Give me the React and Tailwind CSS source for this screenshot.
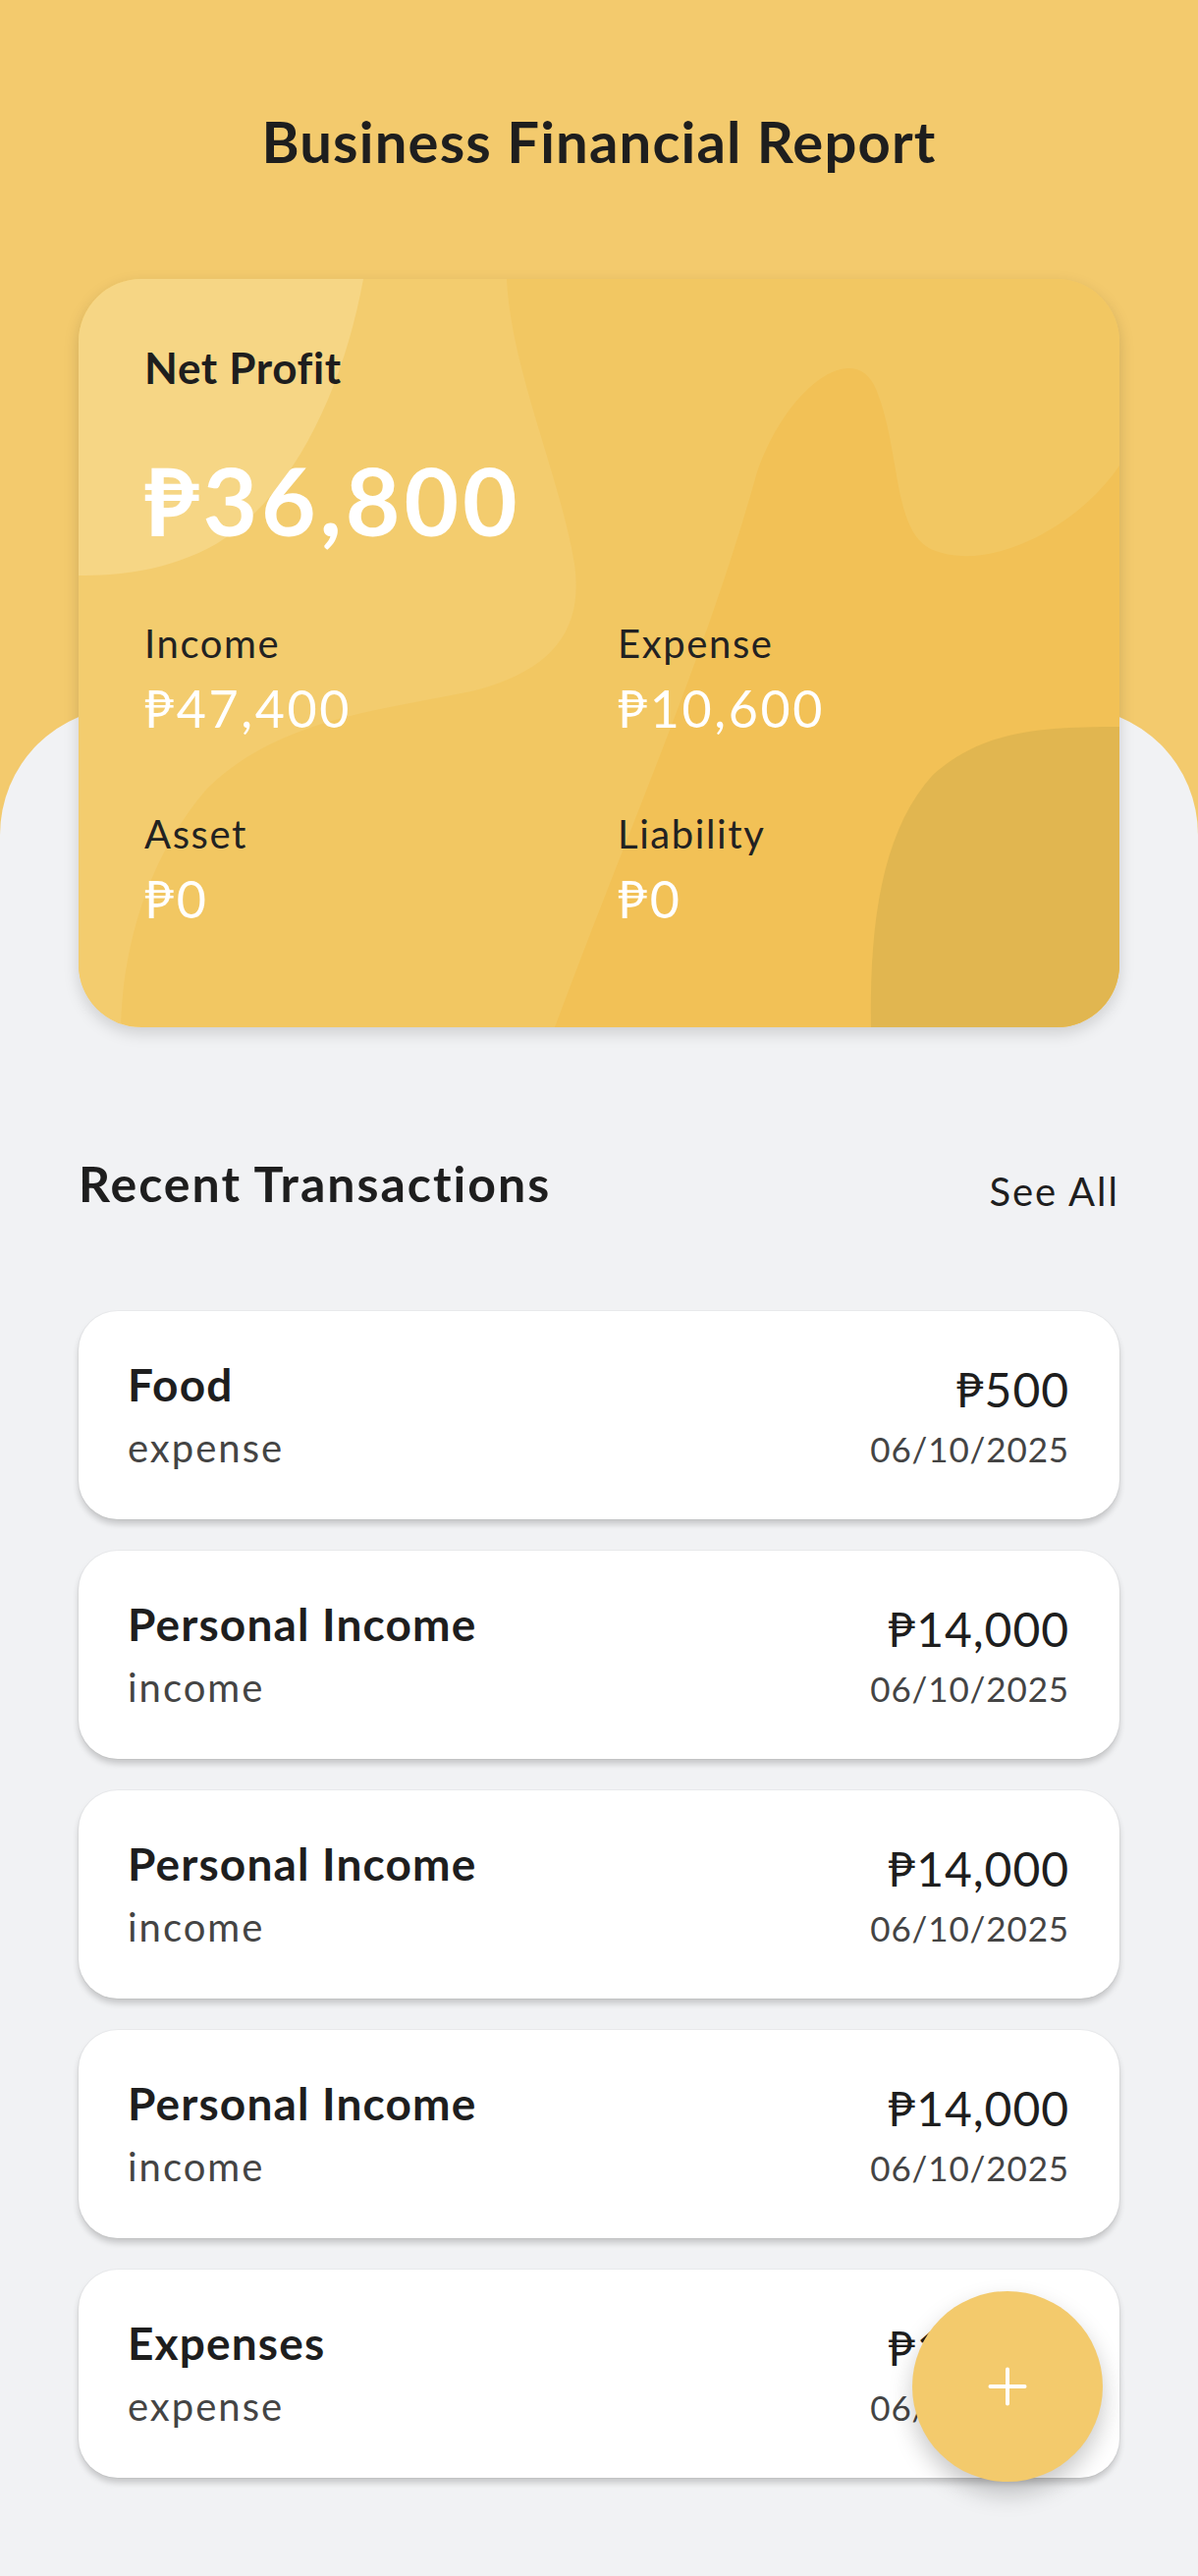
import { Plus } from 'lucide-react';

const transactions = [
  { title: 'Food', type: 'expense', amount: '₱500', date: '06/10/2025' },
  { title: 'Personal Income', type: 'income', amount: '₱14,000', date: '06/10/2025' },
  { title: 'Personal Income', type: 'income', amount: '₱14,000', date: '06/10/2025' },
  { title: 'Personal Income', type: 'income', amount: '₱14,000', date: '06/10/2025' },
  { title: 'Expenses', type: 'expense', amount: '₱10,000', date: '06/10/2025' },
];

const CardBlobs = () => (
  <svg className="absolute inset-0 h-full w-full" viewBox="0 0 1060 762" preserveAspectRatio="none">
    <rect width="1060" height="762" fill="#F2C762" />
    <path d="M485,762 C560,560 640,380 690,200 C720,110 790,60 812,112 C838,175 828,258 870,276 C930,300 1020,250 1060,190 L1060,762 Z" fill="#F2C156" />
    <path d="M0,0 L436,0 C440,90 490,200 505,290 C515,360 480,400 400,420 C300,440 200,450 130,520 C70,590 45,680 43,762 L0,762 Z" fill="#F3CC6E" />
    <path d="M0,0 L290,0 C270,110 220,220 140,270 C90,298 40,302 0,302 Z" fill="#F6D685" />
    <path d="M807,762 C805,650 820,560 870,505 C920,460 980,456 1060,456 L1060,762 Z" fill="#E1B650" />
  </svg>
);

const Stat = ({ label, value, top }) => (
  <div className={top}>
    <p className="text-[40px] leading-none tracking-[0.04em] text-[#222]">{label}</p>
    <p className="mt-[20px] text-[52px] leading-none tracking-[0.05em] text-white">{value}</p>
  </div>
);

const TransactionCard = ({ item }) => (
  <div className="flex h-[212px] justify-between rounded-[40px] bg-white pl-[50px] pr-[51px] shadow-[0_5px_6px_rgba(0,0,0,0.18)] ring-1 ring-black/[0.03]">
    <div className="pt-[52px]">
      <p className="text-[46px] font-bold leading-none tracking-[0.025em] text-[#1e1e1e]">{item.title}</p>
      <p className="mt-[21px] text-[40px] leading-none tracking-[0.05em] text-[#444]">{item.type}</p>
    </div>
    <div className="pt-[56px] text-right">
      <p className="text-[48px] leading-none tracking-[0.02em] text-[#1e1e1e]">{item.amount}</p>
      <p className="mt-[19px] text-[35px] leading-none tracking-[0.025em] text-[#444]">{item.date}</p>
    </div>
  </div>
);

export default function App() {
  return (
    <div className="relative flex min-h-screen flex-col bg-[#F3CA6D] font-['Lato','DejaVu_Sans',sans-serif]">
      <header className="pt-[115px] text-center">
        <h1 className="text-[58px] font-bold leading-none tracking-[0.02em] text-[#1e1e1e]">Business Financial Report</h1>
      </header>

      <div className="relative z-10 mt-[111px] px-[80px]">
        <section className="relative h-[762px] overflow-hidden rounded-[64px] shadow-[0_6px_16px_rgba(0,0,0,0.15)]">
          <CardBlobs />
          <div className="relative px-[67px] pt-[68px]">
            <p className="text-[44px] font-bold leading-none tracking-[0.015em] text-[#1e1e1e]">Net Profit</p>
            <p className="mt-[65px] text-[96px] font-bold leading-none tracking-[0.04em] text-white">₱36,800</p>
            <div className="mt-[78px] grid grid-cols-[482px_1fr]">
              <Stat label="Income" value="₱47,400" />
              <Stat label="Expense" value="₱10,600" />
              <Stat label="Asset" value="₱0" top="mt-[82px]" />
              <Stat label="Liability" value="₱0" top="mt-[82px]" />
            </div>
          </div>
        </section>
      </div>

      <main className="-mt-[326px] flex-1 rounded-t-[130px] bg-[#F1F2F4] px-[80px] pt-[460px] pb-[98px]">
        <div className="flex items-start justify-between">
          <h2 className="text-[50px] font-bold leading-none tracking-[0.04em] text-[#1e1e1e]">Recent Transactions</h2>
          <button className="mt-[13px] text-[40px] leading-none tracking-[0.05em] text-[#1e1e1e]">See All</button>
        </div>
        <div className="mt-[102px] flex flex-col gap-[32px]">
          {transactions.map((item, index) => (
            <TransactionCard key={index} item={item} />
          ))}
        </div>
      </main>

      <button className="absolute bottom-[96px] right-[97px] z-20 flex h-[194px] w-[194px] items-center justify-center rounded-full bg-[#F3CA6C] shadow-[0_12px_24px_rgba(0,0,0,0.22)]">
        <Plus size={60} strokeWidth={1.6} color="#ffffff" />
      </button>
    </div>
  );
}
